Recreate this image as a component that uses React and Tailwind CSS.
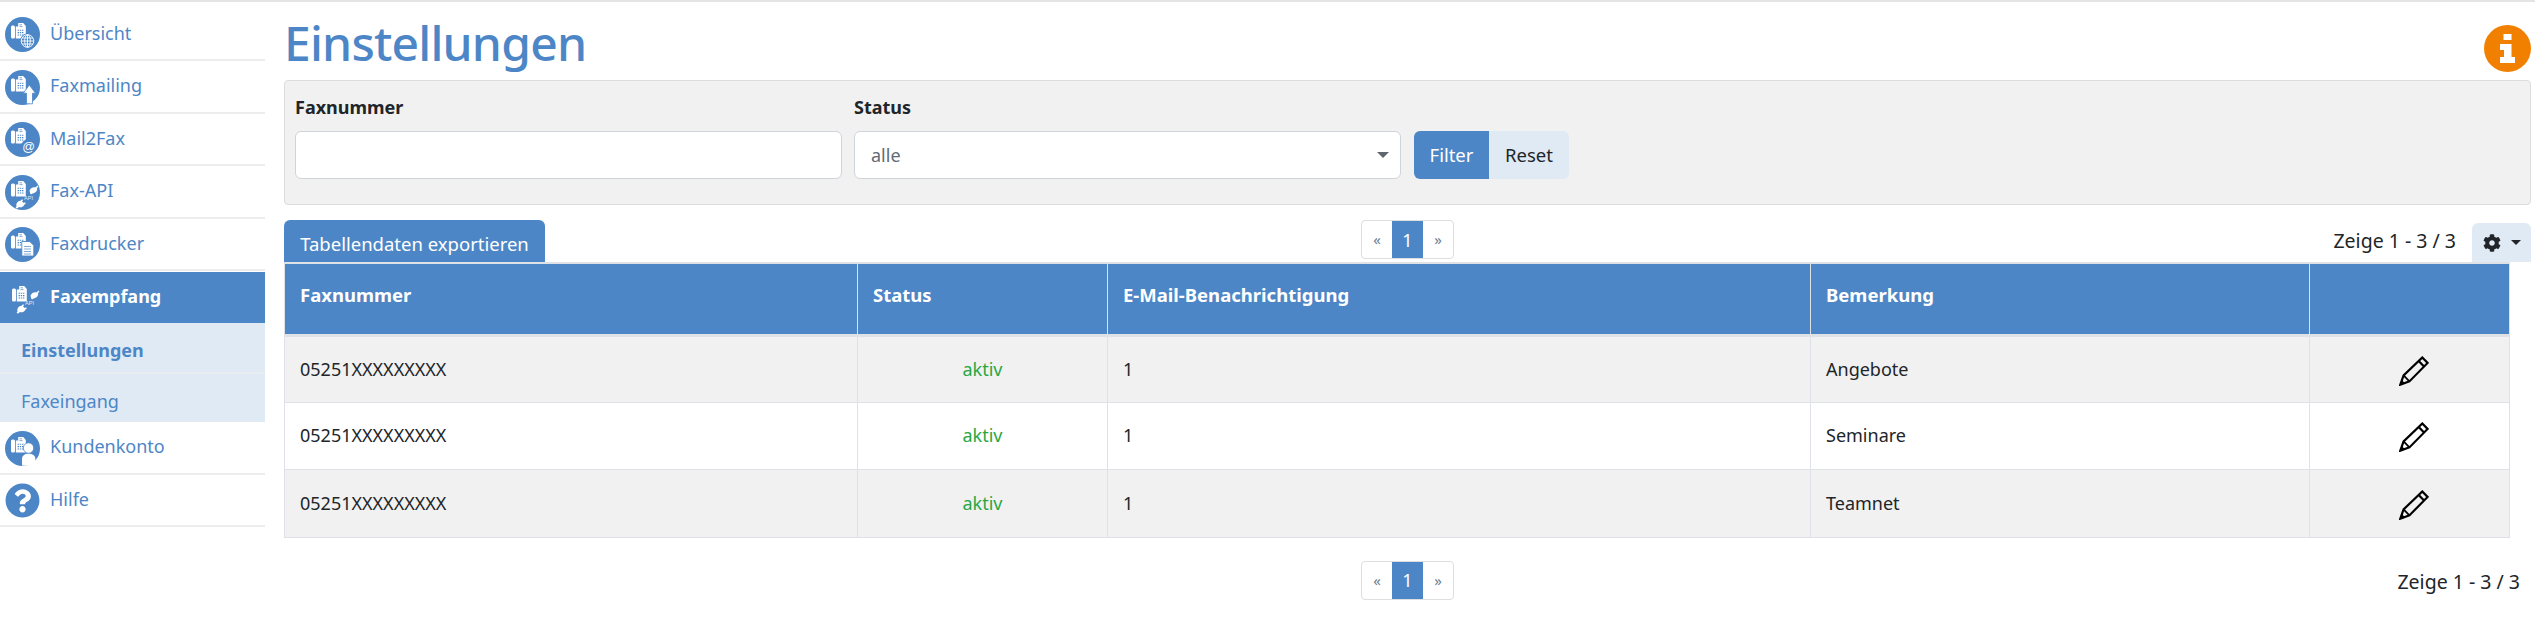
import React from "react";
import { FaCog, FaQuestionCircle } from "react-icons/fa";

const FONT = "font-['Noto_Sans','Open_Sans',sans-serif]";

function FaxBase({ fill = "#fff", hole = "#4d86c6" }) {
  return (
    <g>
      <rect x="6" y="8.5" width="4" height="13" rx="1.5" fill={fill} />
      <path d="M10.8 21.5V9.5h2.4V6h5l2.6 3v12.5z" fill={fill} />
      <path d="M12.6 13.2h6.4M12.6 15.6h6.4M12.6 18h6.4" stroke={hole} strokeWidth="1.1" strokeDasharray="1.4 .8" />
      <path d="M14.5 7.8h2.5M14.5 9.6h3" stroke={hole} strokeWidth=".7" />
    </g>
  );
}

function ApiBadge() {
  return (
    <g>
      <path d="M24.5 15.5c1-2.6 3.6-3.8 6.3-3.2l1.7-1.7.9.9-1.3 1.6c.4 2.9-1.6 5.2-4.5 5.3l-1.6 1-.8-1z" fill="#fff" />
      <path d="M10.5 33c.8-.9 1-1.5 1-2-.6-2.6 1.3-5 4-5.2l1.6-1.6.9.9-.9 1.4 1.6 1.6 1.3-.8.8.9-1.3 1.2c-1 2.3-3.4 3.4-5.6 2.6l-1.6 1.4z" fill="#fff" />
      <text x="19" y="25" fontSize="5.6" fontFamily="Liberation Sans" fill="#fff" fillOpacity=".85">API</text>
    </g>
  );
}

function Badge({ kind }) {
  const blue = "#4d86c6";
  if (kind === "globe")
    return (
      <g>
        <circle cx="22.5" cy="24" r="7.6" fill={blue} />
        <g stroke="#fff" strokeWidth=".9" fill="none">
          <circle cx="22.5" cy="24" r="6.3" />
          <ellipse cx="22.5" cy="24" rx="2.8" ry="6.3" />
          <path d="M16.2 24h12.6M17 21h11M17 27h11M22.5 17.7v12.6" />
        </g>
      </g>
    );
  if (kind === "arrow")
    return <path d="M24.3 15l6.2 8.2h-3V33.8h-6V23.2h-3.2z" fill="#fff" stroke={blue} strokeWidth=".8" />;
  if (kind === "at")
    return (
      <g>
        <circle cx="23.5" cy="24.5" r="7.4" fill={blue} />
        <text x="23.5" y="28.5" textAnchor="middle" fontSize="12.5" fontFamily="Liberation Sans" fill="#fff">@</text>
      </g>
    );
  if (kind === "api") return <ApiBadge />;
  if (kind === "doc")
    return (
      <g>
        <path d="M16.8 14.5h8l4 4v10.5h-12z" fill="#fff" stroke={blue} strokeWidth=".9" />
        <path d="M19 19.5h7M19 22h7M19 24.5h7M19 27h7" stroke={blue} strokeWidth=".7" />
      </g>
    );
  if (kind === "person")
    return (
      <g>
        <circle cx="23.5" cy="17" r="5.2" fill="#fff" stroke={blue} strokeWidth=".8" />
        <path d="M17 34.5v-6.5c0-3.2 2.6-5.2 6.5-5.2s6.8 2 6.8 4.8v5c-4 2-8.600 2.800-13.300 1.900z" fill="#fff" />
      </g>
    );
  return null;
}

function NavIcon({ kind }) {
  if (kind === "help")
    return <FaQuestionCircle className="text-[#4d86c6] w-[35px] h-[35px]" />;
  return (
    <svg width="35" height="35" viewBox="0 0 35 35">
      <circle cx="17.5" cy="17.5" r="17.5" fill="#4d86c6" />
      <FaxBase />
      <Badge kind={kind} />
    </svg>
  );
}

function NavItem({ label, kind }) {
  return (
    <div className="h-[52.5px] flex items-start border-b-2 border-[#ededed] pl-[5px]">
      <div className="mt-[8.5px] shrink-0 w-[35px] h-[35px]">
        <NavIcon kind={kind} />
      </div>
      <span className="ml-[10px] mt-[12px] text-[#4d86c6] text-[18px] leading-6">{label}</span>
    </div>
  );
}

function Sidebar() {
  return (
    <nav className="w-[265px] shrink-0 pt-[6.5px]">
      <NavItem label="Übersicht" kind="globe" />
      <NavItem label="Faxmailing" kind="arrow" />
      <NavItem label="Mail2Fax" kind="at" />
      <NavItem label="Fax-API" kind="api" />
      <NavItem label="Faxdrucker" kind="doc" />
      <div className="h-[51px] mt-[1px] flex items-center bg-[#4d86c6] pl-[6px]">
        <svg width="35" height="35" viewBox="0 0 35 35" className="shrink-0">
          <FaxBase />
          <ApiBadge />
        </svg>
        <span className="ml-[9px] mb-[4px] text-white font-bold text-[18px] leading-6">Faxempfang</span>
      </div>
      <div className="bg-[#e0eaf5]">
        <div className="h-[51px] pt-[5px] flex items-center border-b-2 border-[#e8edf2] pl-[21px] text-[#4d86c6] font-bold text-[18px]">
          Einstellungen
        </div>
        <div className="h-[48px] pt-[6px] flex items-center pl-[21px] text-[#4d86c6] text-[18px]">Faxeingang</div>
      </div>
      <NavItem label="Kundenkonto" kind="person" />
      <NavItem label="Hilfe" kind="help" />
    </nav>
  );
}

function Pagination() {
  return (
    <div className="flex h-[39px] w-[93px] rounded-[4px] border border-[#dcdee0] text-[15px] leading-none overflow-hidden">
      <span className="flex-1 flex items-center justify-center text-[#6c7f95]">«</span>
      <span className="w-[31px] flex items-center justify-center bg-[#4d86c6] text-white text-[18px]">1</span>
      <span className="flex-1 flex items-center justify-center text-[#6c7f95]">»</span>
    </div>
  );
}

function Pencil() {
  return (
    <svg width="30" height="30" viewBox="0 0 30 30" fill="none" stroke="#000" strokeWidth="2.2" className="block mx-auto">
      <path d="M1.3 28.7l3.3-9.3L23.3 1.5l5.3 5.4L10.4 25.4z" strokeLinejoin="miter" />
      <path d="M19.7 5l5.3 5.4" />
      <path d="M4.6 19.4l5.800 6" strokeWidth="1.8" />
      <path d="M1 29l1.700-5.200 3.400 3.600z" fill="#000" stroke="none" />
    </svg>
  );
}

function InfoIcon() {
  return (
    <svg width="47" height="47" viewBox="0 0 47 47">
      <circle cx="23.5" cy="23.5" r="23.5" fill="#f28000" />
      <path d="M19.5 9h8v6h-8zM16 19h11.5v13H31v6H16v-6h4v-7h-4z" fill="#fff" />
    </svg>
  );
}

const rows = [
  ["05251XXXXXXXXX", "Angebote", "bg-[#f1f1f1]", "h-[67px]"],
  ["05251XXXXXXXXX", "Seminare", "bg-white", "h-[67px]"],
  ["05251XXXXXXXXX", "Teamnet", "bg-[#f1f1f1]", "h-[68px]"],
];

const th = "border-x border-[#dee2e6] px-[15px] pt-[19px] align-top text-left font-bold text-white text-[18.5px] leading-6";
const td = "border border-[#dee2e6] px-[15px] text-[#212529] text-[18px]";

function Table() {
  return (
    <table className="table-fixed w-[2225px] border-collapse">
      <colgroup>
        <col className="w-[573px]" />
        <col className="w-[250px]" />
        <col className="w-[703px]" />
        <col className="w-[499px]" />
        <col className="w-[200px]" />
      </colgroup>
      <thead>
        <tr className="h-[72px] bg-[#4d86c6] border-t-2 border-b-[3px] border-[#dee2e6]">
          <th className={th}>Faxnummer</th>
          <th className={th}>Status</th>
          <th className={th}>E-Mail-Benachrichtigung</th>
          <th className={th}>Bemerkung</th>
          <th className={th}></th>
        </tr>
      </thead>
      <tbody>
        {rows.map(([nr, note, bg, h], i) => (
          <tr key={i} className={`${bg} ${h}`}>
            <td className={td}>{nr}</td>
            <td className={`${td} text-center !text-[#28a745]`}>aktiv</td>
            <td className={td}>1</td>
            <td className={td}>{note}</td>
            <td className={`${td} !pl-[23px] pt-[3px]`}>
              <Pencil />
            </td>
          </tr>
        ))}
      </tbody>
    </table>
  );
}

export default function App() {
  return (
    <div className={`${FONT} w-[2535px] h-[633px] overflow-hidden bg-white text-[#212529] border-t-2 border-[#e4e4e4]`}>
      <div className="flex">
        <Sidebar />
        <main className="ml-[19px] w-[2247px]">
          <div className="h-[78px] flex justify-between">
            <h1 className="text-[#4d86c6] text-[48px] tracking-[-0.8px] leading-none mt-[17px] font-medium">Einstellungen</h1>
            <div className="mt-[23px]">
              <InfoIcon />
            </div>
          </div>
          <section className="h-[125px] rounded-[4px] border border-[#dcdcdc] bg-[#f1f1f1] pl-[10px] pt-[14px] flex items-start">
            <div className="w-[547px]">
              <div className="font-bold text-[18px] leading-6 text-[#212529] h-[24px]">Faxnummer</div>
              <input className="block mt-[12px] w-full h-[48px] bg-white border border-[#ced4da] rounded-[6px]" />
            </div>
            <div className="w-[547px] ml-[12px]">
              <div className="font-bold text-[18px] leading-6 text-[#212529] h-[24px]">Status</div>
              <div className="relative mt-[12px] w-full h-[48px] bg-white border border-[#ced4da] rounded-[6px] flex items-center pl-[16px] text-[#5f6b76] text-[18px]">
                alle
                <span className="absolute right-[11px] top-[20px] w-0 h-0 border-x-[6px] border-x-transparent border-t-[6px] border-t-[#5f666d]" />
              </div>
            </div>
            <div className="flex mt-[36px] ml-[13px] h-[48px] text-[18.5px]">
              <span className="w-[75px] flex items-center justify-center bg-[#4d86c6] text-white rounded-l-[6px]">Filter</span>
              <span className="w-[80px] flex items-center justify-center bg-[#e0eaf5] text-[#212529] rounded-r-[6px]">Reset</span>
            </div>
          </section>
          <div className="h-[57px] flex items-end relative">
            <div className="w-[261px] h-[42px] bg-[#4d86c6] rounded-t-[6px] text-white text-[18.5px] flex items-center justify-center pt-[6px]">
              Tabellendaten exportieren
            </div>
            <div className="absolute left-[1077px] top-[15px]">
              <Pagination />
            </div>
            <div className="ml-auto flex items-end">
              <span className="text-[19.5px] leading-6 mb-[9px]">Zeige 1 - 3 / 3</span>
              <div className="ml-[16px] w-[59px] h-[39px] bg-[#e0eaf5] rounded-t-[6px] flex items-center justify-center gap-[10px]">
                <FaCog className="w-[18px] h-[18px] text-[#212529]" />
                <span className="w-0 h-0 border-x-[5px] border-x-transparent border-t-[5px] border-t-[#212529]" />
              </div>
            </div>
          </div>
          <Table />
          <div className="relative h-[62px] w-[2236px]">
            <div className="absolute left-[1077px] top-[23px]">
              <Pagination />
            </div>
            <span className="absolute right-0 top-[32px] text-[19.5px] leading-6">Zeige 1 - 3 / 3</span>
          </div>
        </main>
      </div>
    </div>
  );
}
